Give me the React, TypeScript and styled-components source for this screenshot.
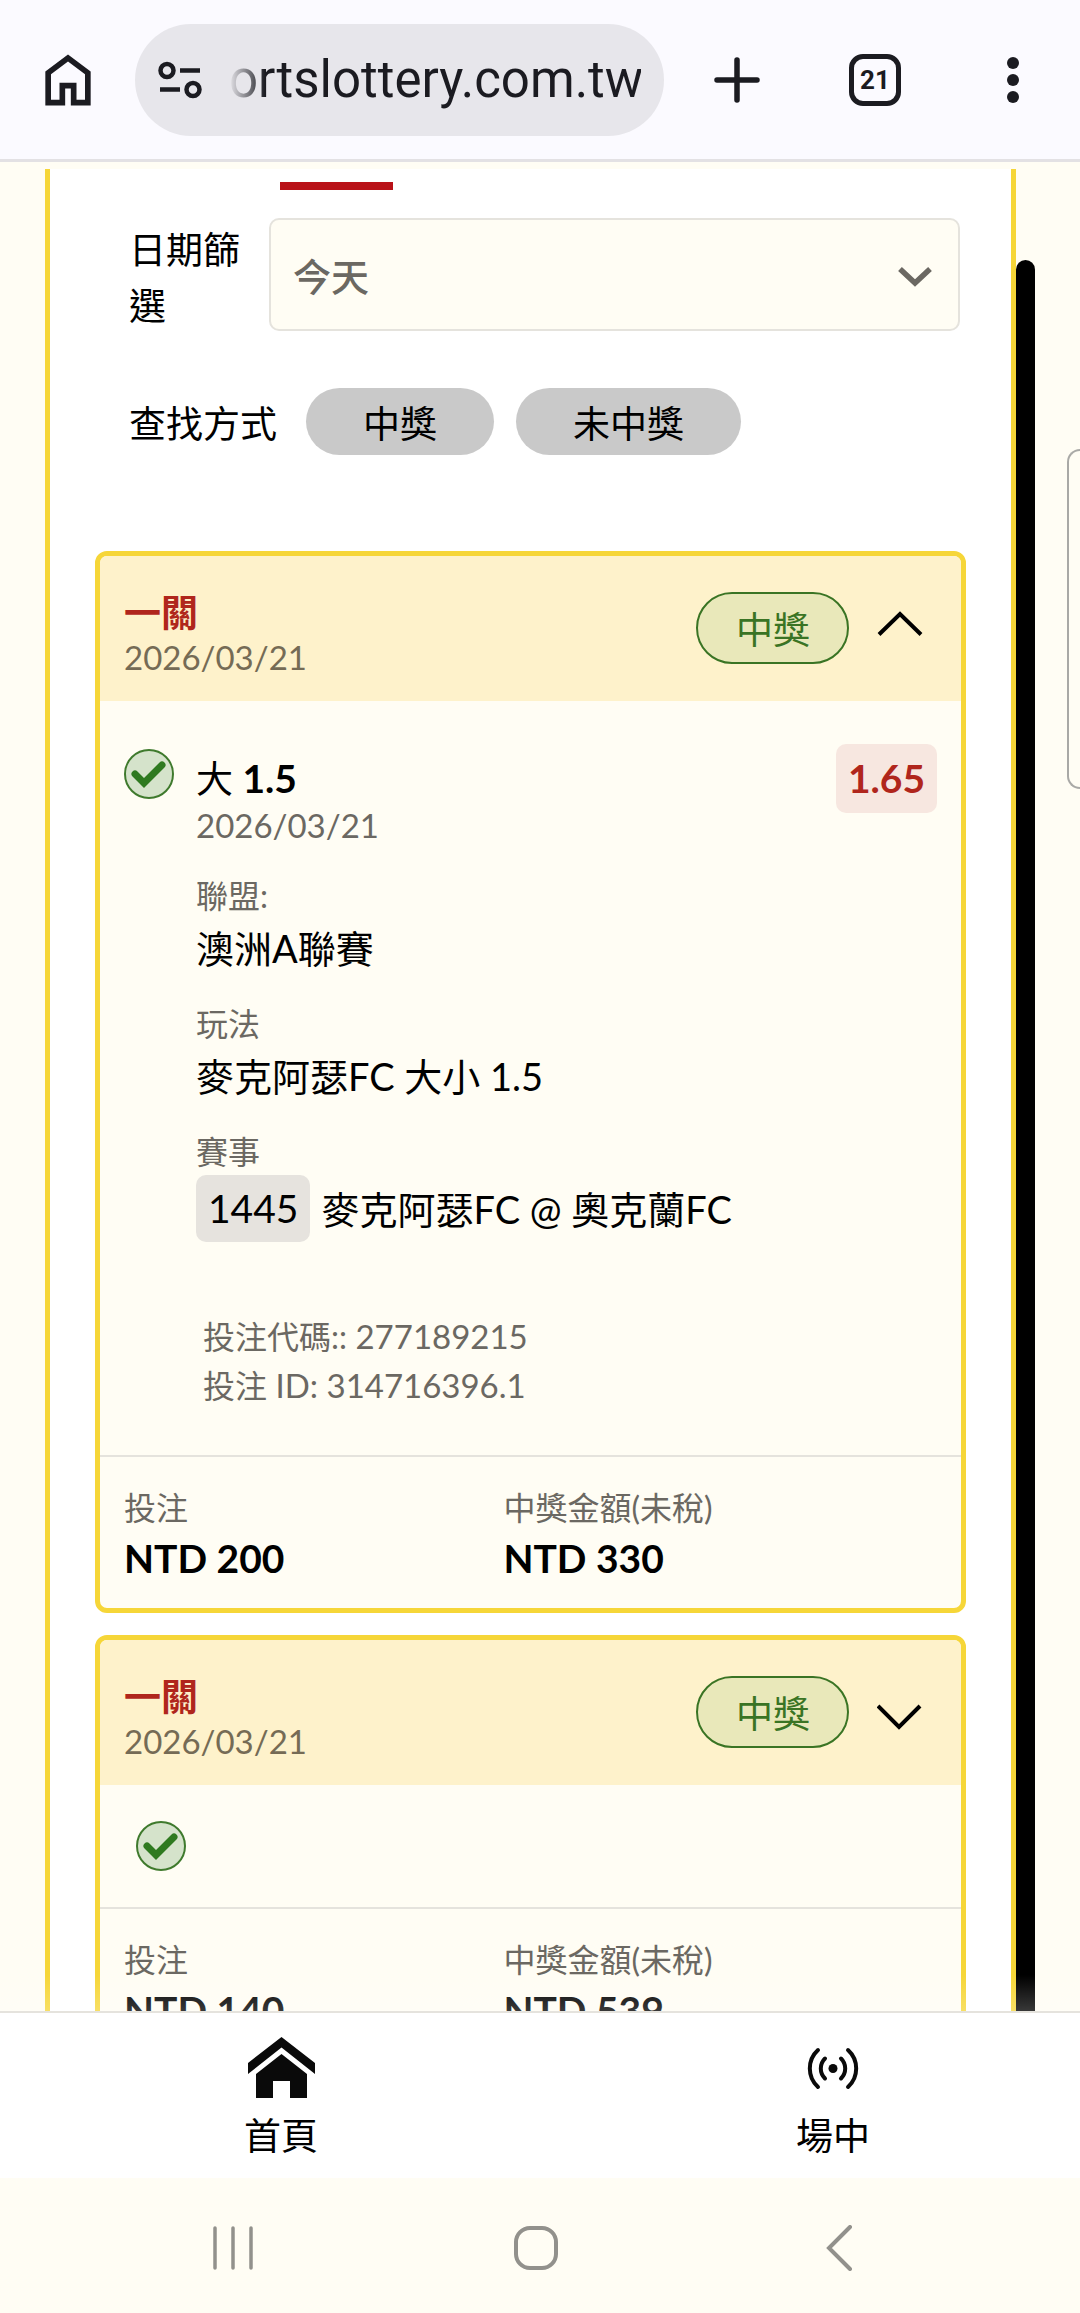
import React, { useState } from "react";
import styled, { createGlobalStyle } from "styled-components";

const cjk = `"Noto Sans CJK TC", "Noto Sans CJK SC", sans-serif`;

const color = {
  ink: "#000000",
  muted: "#6b6862",
  page: "#fffdf4",
  yellow: "#f6d638",
  header: "#fef2cb",
  red: "#b0261c",
  green: "#3a7424",
  line: "#e5e3dd",
  chrome: "#fbfaff",
  chromeInk: "#1b1b21",
};

const GlobalStyle = createGlobalStyle`
  *, *::before, *::after { box-sizing: border-box; }
  body {
    margin: 0;
    background: ${color.page};
    color: ${color.ink};
    font-family: Lato, ${cjk};
  }
  button, input, select { font: inherit; color: inherit; }
  button { border: 0; background: none; padding: 0; cursor: pointer; }
  svg { display: block; }
`;

const Screen = styled.div`
  display: flex;
  flex-direction: column;
  height: 100vh;
  overflow: hidden;
`;

/* Browser toolbar */

const Toolbar = styled.header`
  display: flex;
  align-items: center;
  flex: none;
  height: 162px;
  padding: 0 37px 0 34px;
  background: ${color.chrome};
  border-bottom: 3px solid #e3e1e4;
  color: ${color.chromeInk};
`;

const AddressBar = styled.label`
  display: flex;
  align-items: center;
  flex: 1;
  min-width: 0;
  height: 112px;
  margin: 0 43px 0 33px;
  padding: 0 23px 0 22px;
  gap: 26px;
  border-radius: 56px;
  background: #e7e6eb;
`;

const AddressInput = styled.input`
  flex: 1;
  min-width: 0;
  width: 100%;
  padding: 0;
  border: 0;
  outline: 0;
  background: transparent;
  font-family: Roboto, sans-serif;
  font-size: 51px;
  line-height: 60px;
  text-align: right;
  mask-image: linear-gradient(to right, transparent, #000 36px);
`;

const ToolbarActions = styled.div`
  display: flex;
  gap: 78px;
`;

const ToolbarButton = styled.button`
  display: flex;
  align-items: center;
  justify-content: center;
  width: 60px;
  height: 68px;
`;

const TabCount = styled.span`
  display: flex;
  align-items: center;
  justify-content: center;
  flex: none;
  width: 52px;
  height: 52px;
  border: 5px solid ${color.chromeInk};
  border-radius: 14px;
  font-family: Roboto, sans-serif;
  font-size: 26px;
  font-weight: 700;
`;

/* Page viewport */

const Viewport = styled.main`
  position: relative;
  flex: 1;
  min-height: 0;
  overflow: hidden;
  padding: 7px 64px 0 45px;

  &::after {
    content: "";
    position: absolute;
    inset: auto 0 0 0;
    height: 36px;
    background: linear-gradient(to bottom, rgba(255, 255, 255, 0), rgba(255, 255, 255, 0.22));
  }
`;

const ScrollThumb = styled.div`
  position: absolute;
  top: 98px;
  right: 45px;
  bottom: 0;
  width: 19px;
  border-radius: 10px 10px 0 0;
  background: #000;
`;

const EdgeHandle = styled.div`
  position: absolute;
  top: 287px;
  right: 0;
  width: 13px;
  height: 340px;
  border: 2px solid #a9a9a6;
  border-right: 0;
  border-radius: 14px 0 0 14px;
`;

const Panel = styled.section`
  min-height: 100%;
  padding: 13px 45px 22px;
  border: solid ${color.yellow};
  border-width: 0 5px;
  background: #fff;
`;

const TabIndicator = styled.div`
  width: 113px;
  height: 8px;
  margin-left: 185px;
  background: #b91218;
`;

const Filters = styled.form`
  display: flex;
  flex-direction: column;
  gap: 54px;
  margin-bottom: 96px;
  padding: 28px 6px 0 34px;
`;

const FilterRow = styled.div<{ $top?: boolean }>`
  display: flex;
  align-items: ${(p) => (p.$top ? "flex-start" : "center")};
`;

const FilterLabel = styled.label`
  flex: none;
  width: 140px;
  padding: 4px 28px 0 0;
  font-size: 37px;
  line-height: 56px;
`;

const FilterCaption = styled.span`
  padding: 4px 29px 0 0;
  font-size: 37px;
  line-height: 56px;
`;

const SelectBox = styled.div`
  position: relative;
  flex: 1;
  color: ${color.muted};

  svg {
    position: absolute;
    top: 49px;
    right: 27px;
    pointer-events: none;
  }
`;

const Select = styled.select`
  display: block;
  width: 100%;
  height: 113px;
  padding: 2px 72px 0 22px;
  border: 2px solid ${color.line};
  border-radius: 10px;
  background: ${color.page};
  appearance: none;
  font-size: 38px;
  font-weight: 500;
`;

const Chips = styled.div`
  display: flex;
  gap: 22px;
`;

const Chip = styled.button`
  height: 67px;
  padding: 4px 57px 0;
  border-radius: 34px;
  background: #c9c9c9;
  font-size: 37px;
  line-height: 60px;
`;

/* Bet cards */

const CardList = styled.div`
  display: flex;
  flex-direction: column;
  gap: 22px;
`;

const Card = styled.article`
  overflow: hidden;
  border: 5px solid ${color.yellow};
  border-radius: 12px;
  background: ${color.page};
`;

const CardHeader = styled.header`
  display: flex;
  align-items: center;
  gap: 28px;
  padding: 22px 38px 23px 24px;
  background: ${color.header};
`;

const CardHeading = styled.div`
  flex: 1;
  padding-top: 12px;
`;

const CardTitle = styled.h2`
  margin: 0;
  color: ${color.red};
  font-size: 37px;
  font-weight: 700;
  line-height: 46px;
`;

const DateText = styled.p<{ $tone?: string }>`
  margin: 0;
  color: ${(p) => p.$tone ?? color.muted};
  font-size: 33px;
  line-height: 42px;
`;

const Badge = styled.span`
  height: 72px;
  padding: 4px 37px 0 38px;
  border: 2px solid ${color.green};
  border-radius: 36px;
  background: #e9e8ba;
  color: ${color.green};
  font-size: 37px;
  line-height: 64px;
`;

const Toggle = styled.button`
  display: flex;
  align-items: center;
  justify-content: center;
  width: 46px;
  height: 60px;
`;

const Details = styled.div`
  display: flex;
  align-items: flex-start;
  padding: 43px 24px 45px;
`;

const StatusSlot = styled.div`
  flex: none;
  width: 72px;
  padding-top: 5px;
`;

const DetailColumn = styled.div`
  flex: 1;
  padding-top: 10px;
`;

const Pick = styled.h3`
  margin: 0;
  font-size: 37px;
  font-weight: 400;
  line-height: 50px;
`;

const PickLine = styled.strong`
  font-size: 39px;
  font-weight: 700;
  line-height: 1;
`;

const Odds = styled.strong`
  flex: none;
  height: 69px;
  padding: 0 12px;
  border-radius: 10px;
  background: #f7e7e0;
  color: ${color.red};
  font-size: 39px;
  font-weight: 700;
  line-height: 68px;
`;

const Fields = styled.dl`
  display: flex;
  flex-direction: column;
  gap: 24px;
  margin: 29px 0 0;
`;

const Term = styled.dt`
  color: ${color.muted};
  font-size: 32px;
  line-height: 42px;
`;

const Value = styled.dd`
  margin: 0;
  font-size: 38px;
  line-height: 62px;
`;

const MatchValue = styled(Value)`
  display: flex;
  align-items: center;
  gap: 11px;
  padding: 2px 0;
`;

const MatchCode = styled.span`
  padding: 0 12px;
  border-radius: 10px;
  background: #e6e3de;
  font-size: 39px;
  line-height: 67px;
`;

const References = styled.div`
  margin-top: 68px;
  padding-left: 7px;
  color: ${color.muted};
  font-size: 33px;
  line-height: 49px;

  p {
    margin: 0;
  }
`;

const RefLabel = styled.span`
  font-size: 32px;
  line-height: 1;
`;

const Collapsed = styled.div`
  padding: 36px;
`;

const Totals = styled.dl`
  display: grid;
  grid-template-columns: 7fr 8fr;
  margin: 0;
  padding: 30px 24px 21px;
  border-top: 2px solid ${color.line};
`;

const Amount = styled.dd`
  margin: 0;
  font-size: 39px;
  font-weight: 700;
  line-height: 58px;
`;

/* Bottom bars */

const BottomNav = styled.nav`
  display: flex;
  justify-content: space-between;
  flex: none;
  height: 167px;
  padding: 24px 210px 0 244px;
  border-top: 2px solid ${color.line};
  background: #fff;
`;

const NavLink = styled.a`
  display: flex;
  flex-direction: column;
  align-items: center;
  color: ${color.ink};
  font-size: 37px;
  line-height: 75px;
  text-decoration: none;

  svg {
    height: 61px;
  }
`;

const SystemNav = styled.div`
  display: grid;
  grid-template-columns: repeat(3, 1fr);
  flex: none;
  height: 135px;
  padding: 0 90px 0 81px;
  color: #92918c;
`;

const SystemButton = styled.button`
  display: flex;
  align-items: center;
  justify-content: center;
  padding-top: 4px;
`;

/* Icons */

const HomeOutline = () => (
  <svg width="68" height="68" viewBox="0 -960 960 960" fill="currentColor" aria-hidden="true">
    <path d="M240-200h120v-240h240v240h120v-360L480-740 240-560v360Zm-80 80v-480l320-240 320 240v480H520v-240h-80v240H160Z" />
  </svg>
);

const SiteInfo = () => (
  <svg width="46" height="38" viewBox="0 0 46 38" fill="none" stroke="currentColor" strokeWidth="4.5" aria-hidden="true">
    <circle cx="10" cy="9.500" r="6.500" />
    <path d="M23 9.500H43M3 28.500H23" />
    <circle cx="36" cy="28.500" r="6.500" />
  </svg>
);

const Plus = () => (
  <svg width="46" height="46" viewBox="0 0 46 46" fill="none" stroke="currentColor" strokeWidth="5.500" strokeLinecap="round" aria-hidden="true">
    <path d="M23 3V43M3 23H43" />
  </svg>
);

const Dots = () => (
  <svg width="14" height="48" viewBox="0 0 14 48" fill="currentColor" aria-hidden="true">
    <circle cx="7" cy="7" r="6" />
    <circle cx="7" cy="24" r="6" />
    <circle cx="7" cy="41" r="6" />
  </svg>
);

const SelectArrow = () => (
  <svg width="36" height="22" viewBox="0 0 36 22" fill="none" stroke="currentColor" strokeWidth="5.500" aria-hidden="true">
    <path d="M3 2L18 16L33 2" />
  </svg>
);

const Chevron = ({ up }: { up: boolean }) => (
  <svg width="46" height="36" viewBox="0 0 46 36" fill="none" stroke="#000" strokeWidth="4" aria-hidden="true">
    <path d={up ? "M2 24.500L23 4L44 24.500" : "M1 12L22 33L43 12"} />
  </svg>
);

const CheckMark = () => (
  <svg width="50" height="50" viewBox="0 0 50 50" fill="none" role="img" aria-label="中獎">
    <circle cx="25" cy="25" r="24" fill="#d5e3cb" stroke="#3f7a2d" strokeWidth="2" />
    <path d="M11 25L20 34L38 16" stroke="#2f7a20" strokeWidth="7" strokeLinecap="round" />
  </svg>
);

const HomeSolid = () => (
  <svg width="67" height="61" viewBox="0 0 67 61" fill="#0a0a0a" aria-hidden="true">
    <path d="M33.500 0L67 26V37L33.500 10.500L0 37V26Z" />
    <path d="M33.500 17L59 37V61H42V44H25V61H8V37Z" />
  </svg>
);

const Live = () => (
  <svg width="54" height="61" viewBox="0 0 54 61" fill="none" stroke="#0a0a0a" strokeWidth="4" strokeLinecap="round" aria-hidden="true">
    <circle cx="27" cy="31.500" r="4.500" fill="#0a0a0a" stroke="none" />
    <path d="M12 13A25 25 0 0 0 12 50M42 13A25 25 0 0 1 42 50M19 21.500A14 14 0 0 0 19 41.500M35 21.500A14 14 0 0 1 35 41.500" />
  </svg>
);

const Recents = () => (
  <svg width="42" height="44" viewBox="0 0 42 44" fill="none" stroke="currentColor" strokeWidth="3.500" strokeLinecap="round" aria-hidden="true">
    <path d="M3 2V42M21 2V42M39 2V42" />
  </svg>
);

const SystemHome = () => (
  <svg width="46" height="46" viewBox="0 0 46 46" fill="none" stroke="currentColor" strokeWidth="4" aria-hidden="true">
    <rect x="3" y="3" width="40" height="40" rx="14" />
  </svg>
);

const SystemBack = () => (
  <svg width="28" height="46" viewBox="0 0 28 46" fill="none" stroke="currentColor" strokeWidth="4" strokeLinecap="round" aria-hidden="true">
    <path d="M25 2L4 23L25 44" />
  </svg>
);

/* Data */

interface BetDetail {
  pick: string;
  line: string;
  date: string;
  odds: string;
  league: string;
  market: string;
  code: string;
  match: string;
  betCode: string;
  betId: string;
}

interface Bet {
  title: string;
  date: string;
  stake: string;
  payout: string;
  detail?: BetDetail;
}

const bets: Bet[] = [
  {
    title: "一關",
    date: "2026/03/21",
    stake: "NTD 200",
    payout: "NTD 330",
    detail: {
      pick: "大",
      line: "1.5",
      date: "2026/03/21",
      odds: "1.65",
      league: "澳洲A聯賽",
      market: "麥克阿瑟FC 大小 1.5",
      code: "1445",
      match: "麥克阿瑟FC @ 奧克蘭FC",
      betCode: "277189215",
      betId: "314716396.1",
    },
  },
  { title: "一關", date: "2026/03/21", stake: "NTD 140", payout: "NTD 539" },
];

const BetDetails = ({ detail }: { detail: BetDetail }) => (
  <Details>
    <StatusSlot>
      <CheckMark />
    </StatusSlot>
    <DetailColumn>
      <Pick>
        {detail.pick} <PickLine>{detail.line}</PickLine>
      </Pick>
      <DateText>{detail.date}</DateText>
      <Fields>
        <div>
          <Term>聯盟:</Term>
          <Value>{detail.league}</Value>
        </div>
        <div>
          <Term>玩法</Term>
          <Value>{detail.market}</Value>
        </div>
        <div>
          <Term>賽事</Term>
          <MatchValue>
            <MatchCode>{detail.code}</MatchCode>
            <span>{detail.match}</span>
          </MatchValue>
        </div>
      </Fields>
      <References>
        <p>
          <RefLabel>投注代碼::</RefLabel> {detail.betCode}
        </p>
        <p>
          <RefLabel>投注</RefLabel> ID: {detail.betId}
        </p>
      </References>
    </DetailColumn>
    <Odds>{detail.odds}</Odds>
  </Details>
);

const BetCard = ({ bet }: { bet: Bet }) => {
  const [open, setOpen] = useState(Boolean(bet.detail));
  return (
    <Card>
      <CardHeader>
        <CardHeading>
          <CardTitle>{bet.title}</CardTitle>
          <DateText $tone="#756b55">{bet.date}</DateText>
        </CardHeading>
        <Badge>中獎</Badge>
        <Toggle type="button" aria-expanded={open} aria-label="展開" onClick={() => setOpen(!open)}>
          <Chevron up={open} />
        </Toggle>
      </CardHeader>
      {open && bet.detail ? (
        <BetDetails detail={bet.detail} />
      ) : (
        <Collapsed>
          <CheckMark />
        </Collapsed>
      )}
      <Totals>
        <div>
          <Term>投注</Term>
          <Amount>{bet.stake}</Amount>
        </div>
        <div>
          <Term>中獎金額(未稅)</Term>
          <Amount>{bet.payout}</Amount>
        </div>
      </Totals>
    </Card>
  );
};

export default function App() {
  return (
    <Screen>
      <GlobalStyle />
      <Toolbar>
        <button type="button" aria-label="Home">
          <HomeOutline />
        </button>
        <AddressBar>
          <SiteInfo />
          <AddressInput type="text" aria-label="Address" defaultValue="ortslottery.com.tw" />
        </AddressBar>
        <ToolbarActions>
          <ToolbarButton type="button" aria-label="New tab">
            <Plus />
          </ToolbarButton>
          <ToolbarButton type="button" aria-label="Tabs">
            <TabCount>21</TabCount>
          </ToolbarButton>
          <ToolbarButton type="button" aria-label="Menu">
            <Dots />
          </ToolbarButton>
        </ToolbarActions>
      </Toolbar>

      <Viewport>
        <Panel>
          <TabIndicator />
          <Filters>
            <FilterRow $top>
              <FilterLabel htmlFor="date-filter">日期篩選</FilterLabel>
              <SelectBox>
                <Select id="date-filter" defaultValue="today">
                  <option value="today">今天</option>
                </Select>
                <SelectArrow />
              </SelectBox>
            </FilterRow>
            <FilterRow>
              <FilterCaption>查找方式</FilterCaption>
              <Chips>
                <Chip type="button">中獎</Chip>
                <Chip type="button">未中獎</Chip>
              </Chips>
            </FilterRow>
          </Filters>
          <CardList>
            {bets.map((bet, i) => (
              <BetCard key={i} bet={bet} />
            ))}
          </CardList>
        </Panel>
        <ScrollThumb />
        <EdgeHandle />
      </Viewport>

      <BottomNav>
        <NavLink href="#home">
          <HomeSolid />
          首頁
        </NavLink>
        <NavLink href="#live">
          <Live />
          場中
        </NavLink>
      </BottomNav>
      <SystemNav>
        <SystemButton type="button" aria-label="Recents">
          <Recents />
        </SystemButton>
        <SystemButton type="button" aria-label="Home screen">
          <SystemHome />
        </SystemButton>
        <SystemButton type="button" aria-label="Back">
          <SystemBack />
        </SystemButton>
      </SystemNav>
    </Screen>
  );
}
